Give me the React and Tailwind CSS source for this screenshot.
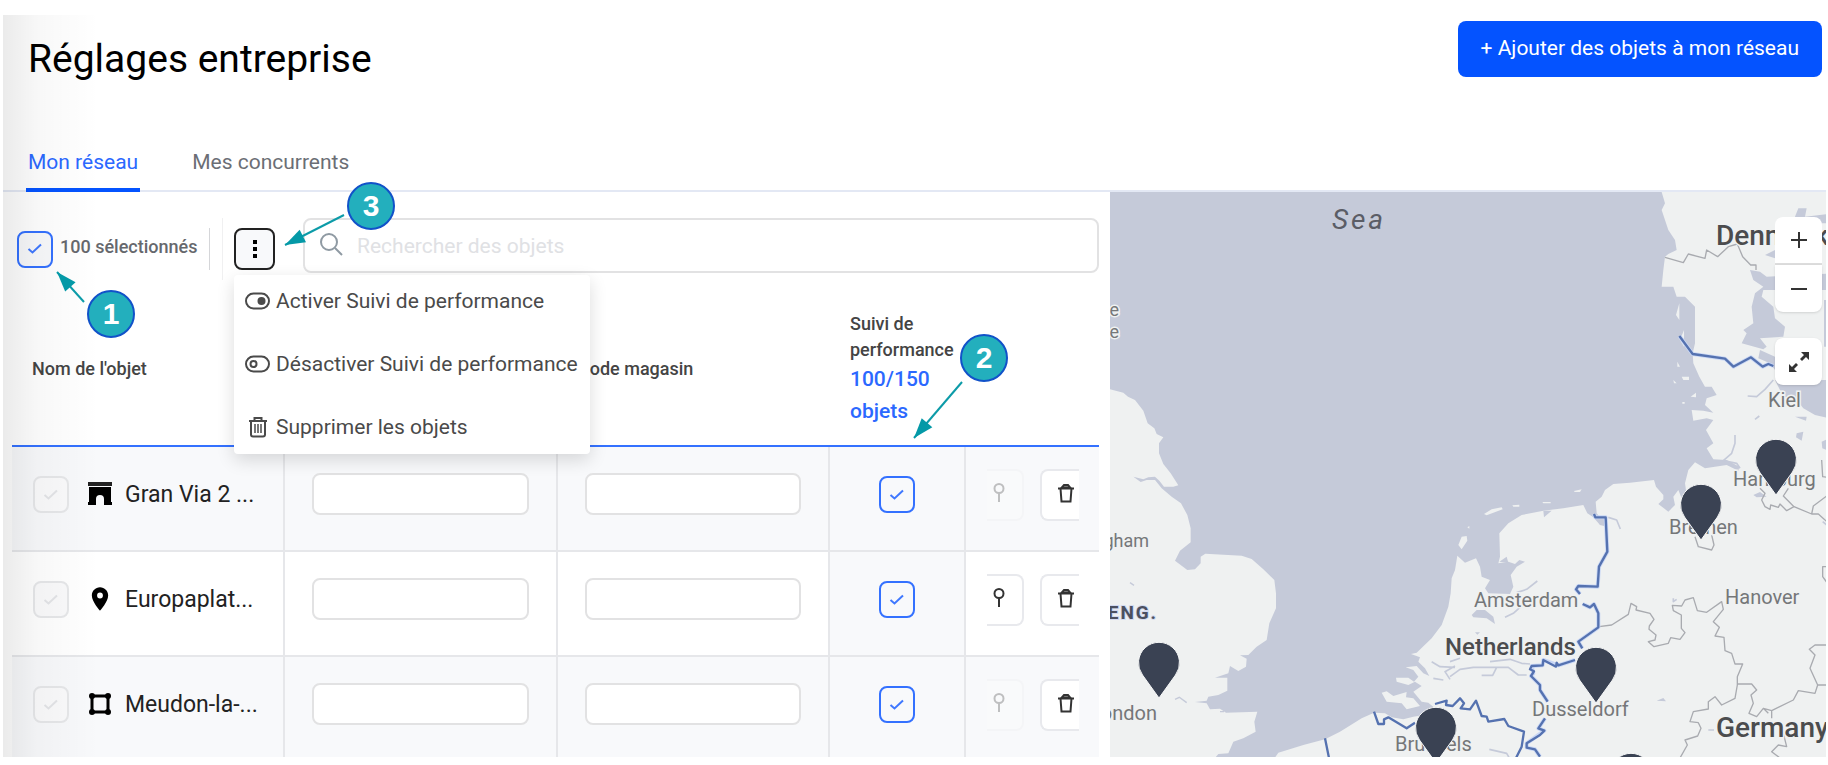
import React, { useState } from "react";
import { MdLocationOn } from "react-icons/md";

const rows = [
  { id: 1, name: "Gran Via 2 ...", type: "mall", canLocate: false },
  { id: 2, name: "Europaplat...", type: "pin", canLocate: true },
  { id: 3, name: "Meudon-la-...", type: "area", canLocate: false },
];

const pins = [
  { id: "london", x: 49, y: 471 },
  { id: "brussels", x: 326, y: 536 },
  { id: "dusseldorf", x: 486, y: 476 },
  { id: "bremen", x: 591, y: 313 },
  { id: "hamburg", x: 666, y: 268 },
  { id: "south", x: 521, y: 582 },
];

const CheckMark = ({ className }) => (
  <svg
    viewBox="0 0 16 16"
    fill="none"
    stroke="currentColor"
    strokeWidth="2"
    className={`pointer-events-none col-start-1 row-start-1 size-4 ${className}`}
  >
    <path d="M1.5 8 5.5 11.500 14 3.500" />
  </svg>
);

const CheckBox = ({ label, id, disabled }) => (
  <span className="inline-grid shrink-0 place-items-center align-top">
    <input
      id={id}
      type="checkbox"
      defaultChecked
      disabled={disabled}
      aria-label={label}
      className="col-start-1 row-start-1 h-[37px] w-9 appearance-none rounded-lg border-2 border-[#3471ff] bg-[#f8f9fb] disabled:border-[#e6e7e9] disabled:bg-[#fafafb]"
    />
    <CheckMark className={disabled ? "text-[#e3e4e7]" : "text-[#3f78ff]"} />
  </span>
);

const ObjectIcon = ({ type }) => {
  if (type === "pin") return <MdLocationOn className="size-7 shrink-0" />;
  if (type === "mall")
    return (
      <svg viewBox="0 0 28 28" className="size-7 shrink-0">
        <path fill="#222" d="M2 2h24v4H2z" />
        <path d="M3 7h22v15h1v3h-8v-6a4 4 0 0 0-8 0v6H2v-3h1z" />
      </svg>
    );
  return (
    <svg viewBox="0 0 28 28" className="size-7 shrink-0">
      <path fill="none" stroke="currentColor" strokeWidth="3" d="M6 6h16v16H6z" />
      <circle cx="6" cy="6" r="3" />
      <circle cx="22" cy="6" r="3" />
      <circle cx="6" cy="22" r="3" />
      <circle cx="22" cy="22" r="3" />
    </svg>
  );
};

const ToggleIcon = ({ on }) => (
  <svg viewBox="0 0 25 18" fill="none" stroke="#4a4a4a" strokeWidth="2" className="h-[18px] w-[25px] shrink-0">
    <rect x="1" y="1.500" width="23" height="15" rx="7.500" />
    {on ? (
      <circle cx="16.500" cy="9" r="4" fill="#4a4a4a" stroke="none" />
    ) : (
      <circle cx="8.500" cy="9" r="3" />
    )}
  </svg>
);

const BinIcon = () => (
  <svg viewBox="0 0 20 22" fill="none" stroke="#4a4a4a" strokeWidth="2" className="h-[22px] w-5">
    <path d="M1 5h18M3 5v13.500a2 2 0 0 0 2 2h10a2 2 0 0 0 2-2V5M6.500 4.500V2h7v2.500" />
    <path strokeWidth="1.500" d="M7 8v9M10 8v9M13 8v9" />
  </svg>
);

const MenuItem = ({ icon, children }) => (
  <button
    role="menuitem"
    className="flex h-[63px] w-full items-start gap-[6px] pt-3 pl-[11px] text-left text-[21px] leading-7 whitespace-nowrap text-[#4a4a4a]"
  >
    <span className="flex h-7 w-[25px] items-center justify-center">{icon}</span>
    {children}
  </button>
);

const Callout = ({ n, className }) => (
  <span
    className={`absolute z-20 flex size-12 items-center justify-center rounded-full border-2 border-[#1152c9] bg-[#23afbd] font-['Liberation_Sans',sans-serif] text-[30px] leading-none font-bold text-white ${className}`}
  >
    {n}
  </span>
);

/* line going from x1,y1 to the tip, head is rotated along it */
const Arrow = ({ x1, y1, x2, y2, className }) => {
  const angle = (Math.atan2(y2 - y1, x2 - x1) * 180) / Math.PI;
  return (
    <svg viewBox="0 0 66 66" className={`pointer-events-none absolute z-20 size-[66px] ${className}`}>
      <path stroke="#0c9ba8" strokeWidth="2" d={`M${x1} ${y1}L${x2} ${y2}`} />
      <path fill="#0499a7" d="M0 0-20-7V7Z" transform={`translate(${x2} ${y2}) rotate(${angle})`} />
    </svg>
  );
};

const MapDrawing = () => (
  <svg
    viewBox="0 0 716 566"
    preserveAspectRatio="xMinYMin slice"
    className="absolute inset-0 size-full bg-[#c5cad9] font-['Roboto',sans-serif]"
    role="img"
    aria-label="Carte des objets"
  >
    {/* Great Britain */}
    <g transform="translate(-10 188) scale(.33333)">
      <path
        fill="#eff1f1"
        d="M28 27 70 38 84 50 105 60 130 92 143 130 163 145 170 162 190 172 177 190V220L190 252 212 280 235 316 220 320 192 320 178 302 165 290 145 292 130 298 100 290 122 306 140 300 165 300 185 325 215 350 243 370 262 405 272 445V487L240 512 225 542 262 570 285 568 302 550V530L316 521 425 527 455 537 490 568 523 600 528 640V685L508 730 500 780 470 800 445 825 420 826 440 836 438 860 415 873 390 858 385 880 345 893 382 893V932L355 945 325 950 320 962 285 966 320 970 330 988 360 986 378 998 472 995 463 1025 467 1055 430 1075 400 1085 385 1120 355 1122 340 1140H28Z"
      />
      <path fill="none" stroke="#c5cad9" strokeWidth="4" d="M225 958 238 952 260 968M90 608 102 616M360 995H372" />
    </g>

    {/* Continental Europe */}
    <g transform="translate(340 188) scale(.33333)" strokeLinejoin="round">
      <path
        fill="#eff1f1"
        d="M-530 1140-515 1118-440 1095-375 1078-330 1055-265 1015-228 998-195 1000-175 1012-140 1018-110 1010-60 1002-45 985-65 968-85 965-110 935-85 918-105 905-125 915-160 905-162 893-125 893-108 905-95 890-110 870-133 862-100 858-80 880-62 888-75 865-95 845-90 832-117 822-100 818-55 775-25 735-5 680 2 640 5 595 15 570 22 527 45 548 78 535 90 560 95 590 120 600 105 625 115 640 180 642 190 620 182 585 200 560 225 545 208 540 195 552 175 545 145 550 150 530 148 460 175 430 215 405 280 392 340 385 400 375 412 400 430 412 450 435 462 425 440 400 437 365 455 350 465 330 490 312 540 308 612 300 618 320 640 345 640 358 625 372 655 395 675 375 670 350 685 330 695 355 710 345 705 310 715 270 735 247 765 265 830 255 865 272 868 260 830 240 790 238 770 205 790 190 768 150 790 120 770 115 730 122 725 90 760 92 790 98 765 75 770 55 800 45 785 20 765 20 748-10 730-50 728-80 735-110V-220L705-250H680L670-280H635L640-330 645-370 655-378 680-390 675-420 655-450 645-480 635-510 645-530 635-564H1150V1140Z"
      />
      <path
        fill="#eff1f1"
        d="M-205 938-190 934-170 948-130 936-132 952-110 955-90 978-130 988-145 970-190 965ZM25 495 35 470 50 468 52 482 35 508ZM102 402 125 388 155 382 158 388 110 406ZM187 376 208 374V380H190ZM277 366H302V370H280ZM372 333 395 328 390 336H374ZM52 442 58 438V446ZM722 50 738 38V52ZM697 66H704V71H697ZM670 0 680 10H672ZM690-120 702-150V-100ZM695-10H717V0H700ZM678-195 688-230V-180ZM682-55 690-40H682Z"
      />
      {/* inlets, lakes and the Baltic side */}
      <path
        fill="#c5cad9"
        d="M900-330 930-325 950-310 1150-320V-270L940-270 935-250 970-220 975-185 1005-160 1000-130 930-125 950-100 940-92 875-110 890-140 880-150 910-170 905-220 915-260 940-280 910-300ZM975 0H1150V118L1095 105 1060 85 1040 60 1000 50ZM1035-490 1045-515 1070-515 1065-490 1150-500V-470H1030ZM1122-240H1150V-100H1122ZM930-90 975-70V-30L960-50 925-65ZM1035 110H1070L1068 122ZM1040 160 1060 155 1055 182 1038 172ZM1115 185 1131 178V210L1117 205ZM280 392H305L282 412ZM65 705 80 690 105 690 130 710 135 732 110 715 70 712ZM75 757H90L82 764ZM620 962 640 954 648 964ZM148 545 170 530 175 548ZM910 345 930 336 950 350 920 352ZM645 372 660 372 652 392ZM445 412 470 412 462 438 450 435ZM945-375 975-390V-365Z"
      />
      <g fill="none" stroke="#c5cad9" strokeWidth="5">
        <path d="M475 412 500 420 511 447M855 165V190L845 220 820 242 860 250 870 265M893 48 920 50 945 28 970 0M915 118 928 108M200 638 230 628 262 603M165 712 190 700 215 678M0 890 30 868 70 862 155 862M95 886H128L140 862 175 862 205 885 230 885M0 845 30 835M120 845 180 838 215 850 240 852M-55 845-30 860 15 862M0 898-15 875 15 858M-50 895-20 900M118 1108 170 1120 178 1134M775 1050H792M670 655V665L680 658M1118 425 1134 438" />
      </g>

      {/* regional borders */}
      <g fill="none" stroke="#a9abb0" strokeWidth="4">
        <path d="M447 740 485 735 535 703 543 670 560 680 558 690 600 700 612 718 598 738 597 748 618 765 615 780 595 785 612 800 655 790 662 773 690 778 705 758 694 745V705L670 692 667 676 695 678 705 660 730 653 742 692 770 697 815 665 820 688 790 725 808 742 795 768 822 772 825 812 845 820 855 852 878 852 862 890V915L855 955 815 975 795 950 775 965V987L730 995 720 1025 745 1028 753 1045 743 1068 705 1080 712 1095 690 1134" />
        <path d="M862 912H905L920 930 903 945 910 970 897 1000 920 1010 940 985 965 992 1030 960 1045 932 1095 940 1103 915 1080 865 1095 825 1078 808 1095 795H1134M1103 915H1134M965 992V1015M940 985 955 1000M1000 1060 1010 1100 985 1095 965 1115 990 1134M1134 560H1118V590L1134 612" />
        <path d="M735 470 745 500 785 510 792 495 785 465M930 325 945 340 935 360 945 380 960 388 962 375 985 382 990 372 1010 392 1032 380 1000 348 1015 325M1032 380 1085 402 1090 378 1134 345M1085 402H1105L1131 425M1115 240 1118 290 1134 292" />
        <path d="M645-368 700-352 715-378 765-365 770-390 803-370 835-400 862-408 878-370 902-345H918V-330" />
      </g>

      {/* country borders */}
      <g fill="none" stroke="#c9d7f5" strokeWidth="12">
        <path d="M688-132 728-78 825-64 850-40 903-68 938-40 955-48 970-42M432 402 436 412H467L472 515 447 560 443 620 385 618 378 628 390 642M398 672 420 682 432 672 445 700V742L385 785 397 805M375 840 325 856 280 840 278 856 245 858 250 880 243 888 270 915V930L293 965M285 1015 265 1045 283 1052 230 1090V1103L255 1108 270 1130" />
      </g>
      <g fill="none" stroke="#5572b0" strokeWidth="7">
        <path d="M688-132 728-78 825-64 850-40 903-68 938-40 955-48 970-42M432 402 436 412H467L472 515 447 560 443 620 385 618 378 628 390 642M398 672 420 682 432 672 445 700V742L385 785 397 805M375 840 325 856 320 848 318 860 280 840 278 856 245 858 240 868 252 874 243 888 270 915V930L293 965M285 1015 265 1045 283 1052 270 1065 230 1090V1103L255 1108 270 1130" />
        <path d="M-45 972-10 962-12 975 8 978 30 955 42 970 32 985 60 988 78 962 95 1008 110 1010 115 1025 163 1017 175 1038 222 1055 215 1100 198 1134M-228 995-215 1032H-198V1018L-185 1012-130 1045-105 1028M-375 1075-363 1134" />
      </g>
    </g>

    <g fill="#757779" stroke="#eff1f1" strokeWidth="3" paintOrder="stroke" fontSize="20">
      <text x="9" y="124" textAnchor="end" fontSize="18">Newcastle</text>
      <text x="9" y="146" textAnchor="end" fontSize="18">upon Tyne</text>
      <text x="39" y="355" textAnchor="end" fontSize="18">Nottingham</text>
      <text x="47" y="528" textAnchor="end">London</text>
      <text x="285" y="559">Brussels</text>
      <text x="364" y="415">Amsterdam</text>
      <text x="422" y="524">Dusseldorf</text>
      <text x="559" y="342">Bremen</text>
      <text x="623" y="294">Hamburg</text>
      <text x="615" y="412">Hanover</text>
      <text x="658" y="215">Kiel</text>
    </g>
    <g fill="#4b4c4e" stroke="#eff1f1" strokeWidth="3" paintOrder="stroke" fontWeight="500">
      <text x="335" y="463" fontSize="24">Netherlands</text>
      <text x="606" y="53" fontSize="28">Denmark</text>
      <text x="606" y="545" fontSize="28">Germany</text>
    </g>
    <text x="48" y="427" textAnchor="end" fontSize="19" fontWeight="700" fill="#4b5060" stroke="#d3daf0" strokeWidth="2" paintOrder="stroke" className="tracking-widest">
      ENG.
    </text>
    <text x="222" y="37" fontSize="28" fontStyle="italic" fill="#5b5d66" className="tracking-widest">
      Sea
    </text>

    {pins.map((pin) => (
      <path
        key={pin.id}
        fill="#3a4253"
        stroke="#f7f8f8"
        strokeWidth="1"
        transform={`translate(${pin.x} ${pin.y})`}
        d="M0 35-16.500 12A20.500 20.500 0 1 1 16.500 12Z"
      />
    ))}
  </svg>
);

const App = () => {
  const [tab, setTab] = useState("reseau");

  return (
    <div className="relative overflow-hidden bg-white pr-[2px] pb-2 pl-[3px] font-['Roboto',sans-serif] text-black">
      <header className="flex h-[138px] items-start justify-between pt-[21px] pr-1 pl-[25px]">
        <h1 className="mt-4 text-[39px] leading-[44px]">Réglages entreprise</h1>
        <button className="h-14 rounded-lg bg-[#0453ff] px-[23px] text-[21px] text-white">
          + Ajouter des objets à mon réseau
        </button>
      </header>

      <nav className="flex h-[54px] gap-[50px] border-b-2 border-[#e3e8f4] pl-[23px] text-[21px]">
        <button
          onClick={() => setTab("reseau")}
          className={`h-[54px] border-b-4 px-[2px] ${
            tab === "reseau" ? "border-[#0453ff] text-[#2b68ff]" : "border-transparent text-[#6b6e75]"
          }`}
        >
          Mon réseau
        </button>
        <button
          onClick={() => setTab("concurrents")}
          className={`h-[54px] border-b-4 px-[2px] ${
            tab === "concurrents" ? "border-[#0453ff] text-[#2b68ff]" : "border-transparent text-[#6b6e75]"
          }`}
        >
          Mes concurrents
        </button>
      </nav>

      <main className="grid grid-cols-[1107fr_716fr]">
        <section className="min-w-0 pt-[26px] pr-[11px] pl-[9px]">
          <div className="flex h-[62px] items-center pl-[5px]">
            <CheckBox id="all" />
            <label htmlFor="all" className="ml-[7px] w-[149px] pb-1 text-lg font-medium whitespace-nowrap text-[#66686d]">
              100 sélectionnés
            </label>
            <span className="h-[42px] w-px bg-[#d5d6d9]" />
            <span className="ml-3 h-[62px] w-px bg-[#f0f0f1]" />
            <div className="relative ml-[11px]">
              <button
                aria-label="Actions"
                className="flex h-[42px] w-[41px] flex-col items-center justify-center gap-[3px] rounded-lg border-2 border-[#222] bg-[#f8f9fb]"
              >
                <span className="size-1 bg-black" />
                <span className="size-1 bg-black" />
                <span className="size-1 bg-black" />
              </button>
              <div
                role="menu"
                className="absolute top-[47px] left-0 z-10 h-[179px] w-[356px] overflow-hidden rounded bg-white shadow-[0_6px_18px_rgba(0,0,0,0.14)]"
              >
                <MenuItem icon={<ToggleIcon on />}>Activer Suivi de performance</MenuItem>
                <MenuItem icon={<ToggleIcon />}>Désactiver Suivi de performance</MenuItem>
                <MenuItem icon={<BinIcon />}>Supprimer les objets</MenuItem>
              </div>
            </div>
            <div className="relative ml-7 flex-1 self-start">
              <svg
                viewBox="0 0 24 24"
                fill="none"
                stroke="#8f9aa3"
                strokeWidth="2"
                className="absolute top-[14px] left-4 size-6"
              >
                <circle cx="10" cy="10" r="8" />
                <path d="m16 16 7 7" />
              </svg>
              <input
                type="search"
                aria-label="Rechercher des objets"
                placeholder="Rechercher des objets"
                className="h-[55px] w-full rounded-lg border-2 border-[#e2e2e3] bg-transparent pl-[52px] text-[21px] placeholder:text-[#e0e1e4]"
              />
            </div>
          </div>

          <table className="w-full table-fixed border-separate border-spacing-0">
            <colgroup>
              <col className="w-[273px]" />
              <col className="w-[273px]" />
              <col className="w-[272px]" />
              <col className="w-[136px]" />
              <col className="w-[133px]" />
            </colgroup>
            <thead>
              <tr className="h-[167px] text-left text-lg text-[#444] *:border-b-2 *:border-[#3471ff]">
                <th className="pt-3 pl-5 font-medium">Nom de l'objet</th>
                <th />
                <th className="pt-3 pl-5 font-medium">Code magasin</th>
                <th className="pt-3 pl-5 leading-[26px] font-medium">
                  Suivi de performance
                  <span className="block text-[21px] leading-8 text-[#2b68ff]">100/150 objets</span>
                </th>
                <th />
              </tr>
            </thead>
            <tbody>
              {rows.map((row) => (
                <tr
                  key={row.id}
                  className="h-[105px] align-top *:border-[#e6e7ea] *:border-b-2 odd:bg-[#f8f9fb] last:h-[100px] last:*:border-b-0"
                >
                  <td className="border-r-2 pt-[29px] pl-[21px]">
                    <div className="flex items-center">
                      <CheckBox label={row.name} disabled />
                      <span className="ml-[17px] flex pb-[2px]">
                        <ObjectIcon type={row.type} />
                      </span>
                      <span className="ml-[11px] text-[23px] leading-9 whitespace-nowrap text-[#222]">
                        {row.name}
                      </span>
                    </div>
                  </td>
                  <td className="border-r-2 px-[27px] pt-[26px]">
                    <input aria-label="Nom personnalisé" className="h-[42px] w-full rounded-lg border-2 border-[#e2e2e3] bg-white px-3" />
                  </td>
                  <td className="border-r-2 px-[27px] pt-[26px]">
                    <input aria-label="Code magasin" className="h-[42px] w-full rounded-lg border-2 border-[#e2e2e3] bg-white px-3" />
                  </td>
                  <td className="border-r-2 bg-[#f8f9fb] pt-[29px] text-center">
                    <CheckBox label="Suivi de performance" />
                  </td>
                  <td className="pt-[22px] pl-[21px]">
                    <div className="flex gap-4">
                      <button
                        aria-label="Localiser"
                        disabled={!row.canLocate}
                        className="flex h-[52px] w-[37px] items-center rounded-r-lg border-y-2 border-r-2 border-[#e8e9ed] bg-white pl-1 disabled:border-[#f3f3f5] disabled:bg-[#fbfbfc] disabled:opacity-60"
                      >
                        <svg viewBox="0 0 16 22" fill="none" stroke={row.canLocate ? "#333" : "#999"} strokeWidth="2" className="mb-1 h-[22px] w-4">
                          <circle cx="8" cy="6.500" r="4.500" />
                          <path d="M8 11V20" />
                        </svg>
                      </button>
                      <button
                        aria-label="Supprimer"
                        className="flex h-[52px] w-[39px] items-center justify-end rounded-l-lg border-y-2 border-l-2 border-[#e8e9ed] bg-white pr-1"
                      >
                        <svg viewBox="0 0 18 22" fill="none" stroke="#333" strokeWidth="2" className="mb-1 h-[22px] w-[18px]">
                          <path d="M1 6.500h16M3.500 6.500l1 13h9l1-13" />
                          <path fill="#777" d="M4.500 6 7 3h4l2.500 3z" />
                        </svg>
                      </button>
                    </div>
                  </td>
                </tr>
              ))}
            </tbody>
          </table>
        </section>

        <section className="relative overflow-hidden">
          <MapDrawing />
          <div className="absolute top-[25px] right-1 flex w-[47px] flex-col text-[#333]">
            <button aria-label="Zoom avant" className="grid h-12 place-items-center rounded-t-lg border-b-2 border-[#ddd] bg-white">
              <svg viewBox="0 0 18 18" stroke="currentColor" strokeWidth="2" className="size-[18px]">
                <path d="M9 1v16M1 9h16" />
              </svg>
            </button>
            <button aria-label="Zoom arrière" className="grid h-[47px] place-items-center rounded-b-lg bg-white shadow">
              <svg viewBox="0 0 18 18" stroke="currentColor" strokeWidth="2" className="size-[18px]">
                <path d="M1 9h16" />
              </svg>
            </button>
            <button aria-label="Plein écran" className="mt-[26px] grid h-[47px] place-items-center rounded-lg bg-white shadow">
              <svg viewBox="0 0 20 20" fill="currentColor" className="size-5">
                <path d="M12 0h8v8l-3-3-4 4-2-2 4-4zM8 20H0v-8l3 3 4-4 2 2-4 4z" />
              </svg>
            </button>
          </div>
        </section>
      </main>

      {/* soft shade along the left edge */}
      <div className="pointer-events-none absolute top-[15px] bottom-2 left-[3px] w-[96px] bg-linear-to-r from-black/8 via-black/3 via-35% to-transparent" />

      <Callout n={1} className="top-[290px] left-[87px]" />
      <Arrow x1={30} y1={33} x2={3} y2={3} className="top-[269px] left-[54px]" />
      <Callout n={2} className="top-[334px] left-[960px]" />
      <Arrow x1={52} y1={3} x2={4} y2={59} className="top-[379px] left-[910px]" />
      <Callout n={3} className="top-[182px] left-[347px]" />
      <Arrow x1={62} y1={3} x2={3} y2={33} className="top-[212px] left-[282px]" />
    </div>
  );
};

export default App;
